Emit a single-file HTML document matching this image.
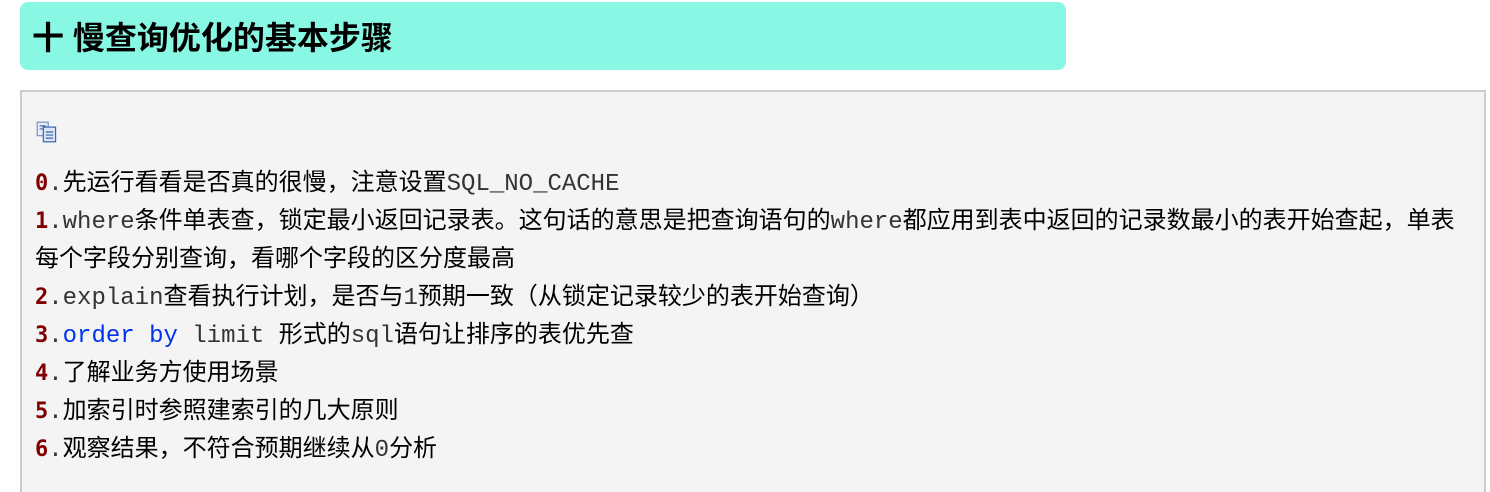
<!DOCTYPE html>
<html><head><meta charset="utf-8"><style>
body{margin:0;background:#fff;width:1490px;height:478px;overflow:hidden;font-family:"Liberation Sans","Noto Sans CJK SC",sans-serif;}
.h{position:absolute;left:20px;top:2px;width:1046px;height:68px;background:#88f7e3;border-radius:8px;}
.h span{position:absolute;left:12px;top:15px;font-size:32px;font-weight:bold;line-height:42px;color:#000;white-space:nowrap;}
.box{position:absolute;left:20px;top:90px;width:1462px;height:400px;background:#f4f4f4;border:2px solid #ccc;border-bottom:none;}
.l{position:absolute;left:13px;font-size:24px;line-height:30px;white-space:nowrap;color:#000;font-family:"Liberation Sans","Noto Sans CJK SC",sans-serif;}
.m{font-family:"Liberation Mono",monospace;font-size:24px;color:#333;}
.n{font-family:"DejaVu Sans Mono","Liberation Mono",monospace;font-size:22px;font-weight:bold;color:#800000;}
.b{color:#0033ee;}
</style></head><body>
<div class="h"><span>十 慢查询优化的基本步骤</span></div>
<div class="box">
<svg style="position:absolute;left:14px;top:29px" width="22" height="22" viewBox="0 0 18 18">
<rect x="1" y="1" width="9" height="11" fill="#e8eef8" stroke="#7a93c4"/>
<rect x="6" y="5" width="10" height="12" fill="#dbe6f7" stroke="#3d66b3"/>
<path d="M8 9h6M8 11.5h6M8 14h6M3 4h5M3 6.5h3" stroke="#3d66b3" stroke-width="1"/>
</svg>
<div class="l" style="top:76px"><span class="n">0</span><span class="m">.</span>先运行看看是否真的很慢，注意设置<span class="m">SQL_NO_CACHE</span></div>
<div class="l" style="top:114px"><span class="n">1</span><span class="m">.where</span>条件单表查，锁定最小返回记录表。这句话的意思是把查询语句的<span class="m">where</span>都应用到表中返回的记录数最小的表开始查起，单表</div>
<div class="l" style="top:152px">每个字段分别查询，看哪个字段的区分度最高</div>
<div class="l" style="top:190px"><span class="n">2</span><span class="m">.explain</span>查看执行计划，是否与<span class="m">1</span>预期一致（从锁定记录较少的表开始查询）</div>
<div class="l" style="top:228px"><span class="n">3</span><span class="m">.<span class="b">order by</span> limit </span>形式的<span class="m">sql</span>语句让排序的表优先查</div>
<div class="l" style="top:266px"><span class="n">4</span><span class="m">.</span>了解业务方使用场景</div>
<div class="l" style="top:304px"><span class="n">5</span><span class="m">.</span>加索引时参照建索引的几大原则</div>
<div class="l" style="top:342px"><span class="n">6</span><span class="m">.</span>观察结果，不符合预期继续从<span class="m">0</span>分析</div>
</div>
</body></html>
